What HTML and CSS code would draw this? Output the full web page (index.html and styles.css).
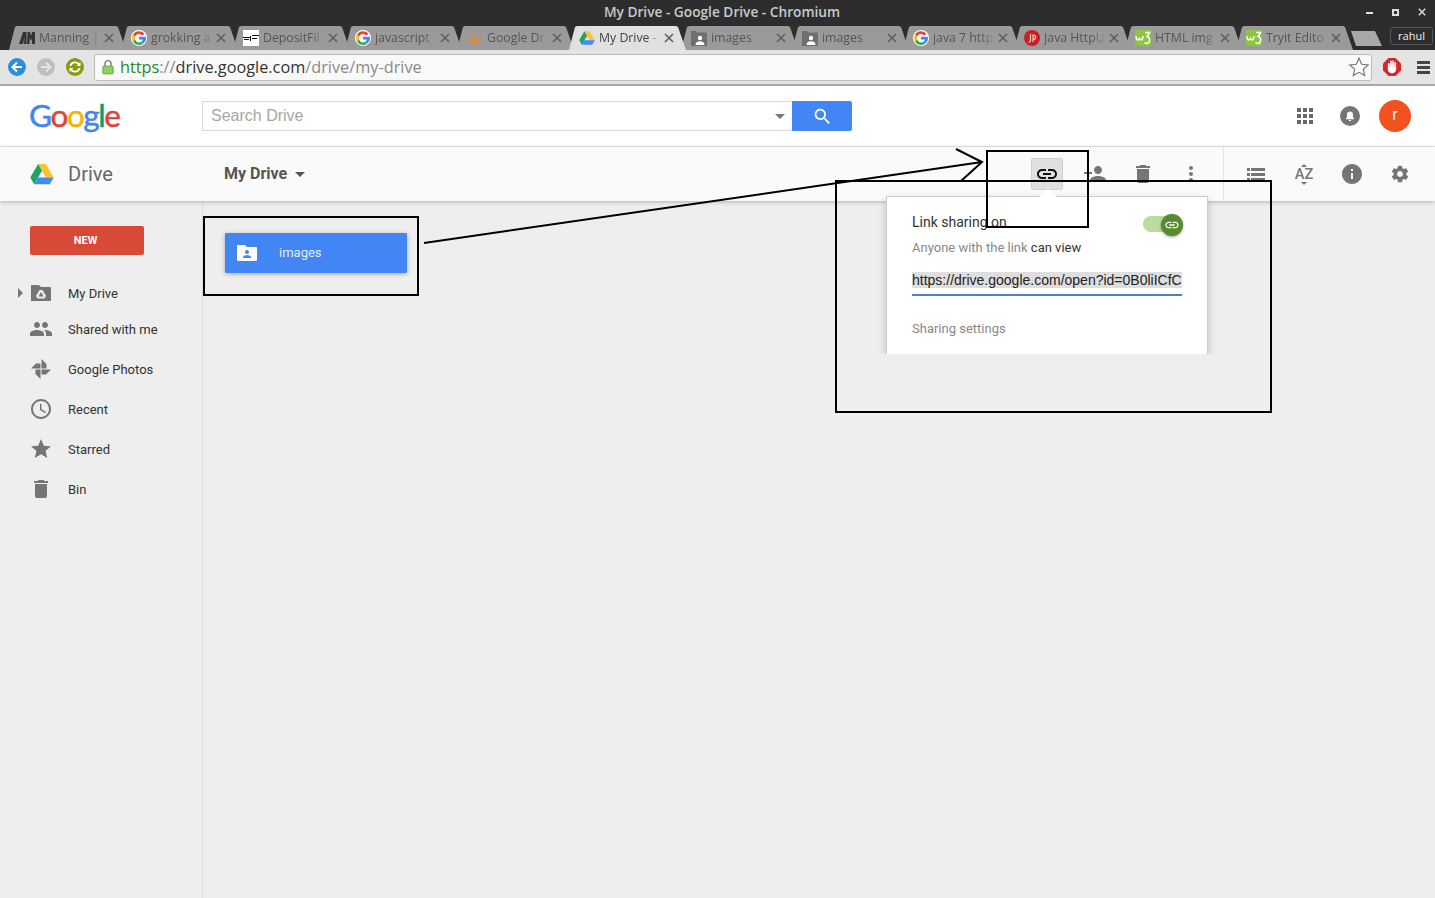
FILE: index.html
```html
<!DOCTYPE html>
<html lang="en">
<head>
    <meta charset="UTF-8">
    <title>My Drive - Google Drive - Chromium</title>
    <link rel="stylesheet" href="styles.css">
</head>
<body>
    <svg class="defs" width="0" height="0">
        <symbol id="ico-g" viewBox="0 0 16 16">
            <circle cx="8" cy="8" r="8" fill="#fff"/>
            <path d="M13.400 3.900A6.800 6.800 0 0 0 2 4.600l2.200 1.800A4 4 0 0 1 11 5.500z" fill="#ea4335"/>
            <path d="M2 4.600a6.800 6.800 0 0 0 0 6.800l2.200-1.800a4 4 0 0 1 0-3.200z" fill="#fbbc05"/>
            <path d="M2 11.400a6.800 6.800 0 0 0 10 2.300l-2.100-1.700A4 4 0 0 1 4.200 9.600z" fill="#34a853"/>
            <path d="M12 13.700a6.800 6.800 0 0 0 2.800-6.900H8v2.700h3.900A3.500 3.500 0 0 1 9.900 12z" fill="#4285f4"/>
        </symbol>
        <symbol id="ico-drive" viewBox="0 0 24 22">
            <path d="M8.100 1h7.800l7.800 13.400h-7.800z" fill="#f7c52d"/>
            <path d="M8.100 1 .3 14.400l3.900 6.800L12 7.700z" fill="#1ea362"/>
            <path d="M4.200 21.200h15.600l3.900-6.800H8.100z" fill="#4688f4"/>
        </symbol>
        <symbol id="ico-shared" viewBox="0 0 16 16">
            <path d="M0 1h5l1.500 1.500H15a1 1 0 0 1 1 1V16H0z" fill="#6f6f6f"/>
            <circle cx="9" cy="8" r="2.200" fill="#fff"/>
            <path d="M4.500 15c0-3 2.500-3.800 4.500-3.800s4.500.8 4.500 3.800z" fill="#fff"/>
        </symbol>
        <symbol id="ico-w3" viewBox="0 0 16 16">
            <rect width="16" height="16" fill="#8cc63f"/>
            <path d="M1 6c0 5 3 5 3.500 1.500C5 11 8 11 8 6" fill="none" stroke="#fff" stroke-width="1.400"/>
            <path d="M10 2.500h4.500l-2.500 4c3.500 0 3.500 7-.5 7-1 0-1.500-.5-2-1" fill="none" stroke="#fff" stroke-width="1.500"/>
        </symbol>
        <symbol id="ico-x" viewBox="0 0 10 10">
            <path d="M1 1l8 8M9 1l-8 8" stroke="currentColor" stroke-width="1.700" fill="none"/>
        </symbol>
        <symbol id="ico-link" viewBox="0 0 24 24">
            <path d="M3.900 12c0-1.710 1.390-3.100 3.100-3.100h4V7H7c-2.760 0-5 2.240-5 5s2.240 5 5 5h4v-1.900H7c-1.710 0-3.100-1.390-3.100-3.100zM8 13h8v-2H8v2zm9-6h-4v1.900h4c1.710 0 3.100 1.390 3.100 3.100s-1.390 3.100-3.100 3.100h-4V17h4c2.760 0 5-2.240 5-5s-2.240-5-5-5z"/>
        </symbol>
        <symbol id="ico-trash" viewBox="0 0 24 24">
            <path d="M6 19c0 1.100.9 2 2 2h8c1.100 0 2-.9 2-2V7H6v12zM19 4h-3.500l-1-1h-5l-1 1H5v2h14V4z"/>
        </symbol>
    </svg>

    <div class="titlebar">
        <div class="title">My Drive - Google Drive - Chromium</div>
        <div class="win-btns">
            <span class="win-min"></span>
            <span class="win-max"></span>
            <svg class="win-close" width="10" height="10"><use href="#ico-x"/></svg>
        </div>
    </div>

    <div class="tabstrip">
        <div class="tab">
            <svg class="favicon" viewBox="0 0 16 16"><path d="M0 14 4 2h3.500v12H5l.5-7L4 14zM8.500 2H11l1 4 1-4h3v12h-3V8l-1 3-1.500-3v6h-2.500z" fill="#333"/></svg>
            <span class="tab-title">Manning |</span>
            <svg class="tab-x"><use href="#ico-x"/></svg>
        </div>
        <div class="tab">
            <svg class="favicon"><use href="#ico-g"/></svg>
            <span class="tab-title">grokking a</span>
            <svg class="tab-x"><use href="#ico-x"/></svg>
        </div>
        <div class="tab">
            <svg class="favicon" viewBox="0 0 16 16"><rect width="16" height="16" fill="#fff"/><path d="M0 7h7v1H0zM9 5h7v1H9zM1 9h5v1H1zM7 6h1v5H7zM9 8h5v1H9z" fill="#111"/></svg>
            <span class="tab-title">DepositFil</span>
            <svg class="tab-x"><use href="#ico-x"/></svg>
        </div>
        <div class="tab">
            <svg class="favicon"><use href="#ico-g"/></svg>
            <span class="tab-title">javascript</span>
            <svg class="tab-x"><use href="#ico-x"/></svg>
        </div>
        <div class="tab">
            <svg class="favicon" viewBox="0 0 16 16"><path d="M4 14V9l3-5 2 1-1 4h6l-1 5zM1 9h2v5H1z" fill="#d98a3c"/></svg>
            <span class="tab-title">Google Dr</span>
            <svg class="tab-x"><use href="#ico-x"/></svg>
        </div>
        <div class="tab tab-active">
            <svg class="favicon"><use href="#ico-drive"/></svg>
            <span class="tab-title">My Drive -</span>
            <svg class="tab-x"><use href="#ico-x"/></svg>
        </div>
        <div class="tab tab-tight">
            <svg class="favicon"><use href="#ico-shared"/></svg>
            <span class="tab-title">images</span>
            <svg class="tab-x"><use href="#ico-x"/></svg>
        </div>
        <div class="tab tab-tight">
            <svg class="favicon"><use href="#ico-shared"/></svg>
            <span class="tab-title">images</span>
            <svg class="tab-x"><use href="#ico-x"/></svg>
        </div>
        <div class="tab tab-tight">
            <svg class="favicon"><use href="#ico-g"/></svg>
            <span class="tab-title">java 7 http</span>
            <svg class="tab-x"><use href="#ico-x"/></svg>
        </div>
        <div class="tab tab-tight">
            <svg class="favicon" viewBox="0 0 16 16"><circle cx="8" cy="8" r="8" fill="#c92020"/><path d="M6.500 4v7a2 2 0 0 1-2 1M9 12V5c3.500 0 3.500 4.500 0 4.500" stroke="#f0d0d0" stroke-width="1.200" fill="none"/></svg>
            <span class="tab-title">Java HttpU</span>
            <svg class="tab-x"><use href="#ico-x"/></svg>
        </div>
        <div class="tab tab-tight">
            <svg class="favicon"><use href="#ico-w3"/></svg>
            <span class="tab-title">HTML img</span>
            <svg class="tab-x"><use href="#ico-x"/></svg>
        </div>
        <div class="tab tab-tight">
            <svg class="favicon"><use href="#ico-w3"/></svg>
            <span class="tab-title">Tryit Edito</span>
            <svg class="tab-x"><use href="#ico-x"/></svg>
        </div>
        <div class="tab-new"></div>
        <div class="profile">rahul</div>
    </div>

    <div class="toolbar">
        <svg class="nav-btn" viewBox="0 0 18 18"><circle cx="9" cy="9" r="9" fill="#2b8fd8"/><path d="M14 9H5M9 4.500 4.500 9 9 13.500" stroke="#fff" stroke-width="2" fill="none"/></svg>
        <svg class="nav-btn" viewBox="0 0 18 18"><circle cx="9" cy="9" r="9" fill="#bcbfc2"/><path d="M4 9h9M9 4.500 13.500 9 9 13.500" stroke="#e4e4e4" stroke-width="2" fill="none"/></svg>
        <svg class="nav-btn" viewBox="0 0 18 18"><circle cx="9" cy="9" r="9" fill="#8b9a0c"/><path d="M4.300 8a5 5 0 0 1 8.900-1.500M13.700 10a5 5 0 0 1-8.900 1.500" stroke="#fff" stroke-width="1.800" fill="none"/><path d="M14.500 4v4h-4zM3.500 14v-4h4z" fill="#fff"/></svg>
        <div class="omnibox">
            <svg class="lock" viewBox="0 0 14 18"><path d="M3.500 8V5a3.500 3.500 0 0 1 7 0v3" stroke="#777" stroke-width="1.600" fill="none"/><rect x="1" y="8" width="12" height="9" rx="1" fill="#8ed05a" stroke="#5f9a35"/></svg>
            <div class="url"><span class="url-https">https</span><span class="url-dim">://</span><span class="url-host">drive.google.com</span><span class="url-dim">/drive/my-drive</span></div>
            <svg class="star" viewBox="0 0 24 24"><path d="M12 2.500l2.900 6.500 7.100.7-5.300 4.700 1.500 7-6.200-3.600-6.200 3.600 1.500-7L2 9.700l7.100-.7z" fill="#fff" stroke="#777" stroke-width="1.300"/></svg>
        </div>
        <svg class="adblock" viewBox="0 0 18 18">
            <path d="M5.500 0h7L18 5.500v7L12.500 18h-7L0 12.500v-7z" fill="#d8262c"/>
            <path d="M5.800 6v5M8 3.500V10M10 3.500V10M12.200 5v6" stroke="#fff" stroke-width="1.800" stroke-linecap="round"/>
            <path d="M4.900 9h8.200v2.500c0 2-1.800 3.700-4.100 3.700s-4.100-1.700-4.100-3.700z" fill="#fff"/>
        </svg>
        <div class="menu-btn"><span></span><span></span><span></span></div>
    </div>

    <header class="gbar">
        <div class="glogo"><span class="c-blue">G</span><span class="c-red">o</span><span class="c-yellow">o</span><span class="c-blue">g</span><span class="c-green">l</span><span class="c-red">e</span></div>
        <div class="search">
            <div class="search-box">
                <span class="search-text">Search Drive</span>
                <span class="caret caret-search"></span>
            </div>
            <div class="search-btn">
                <svg viewBox="0 0 24 24" width="21" height="21" fill="#fff"><path d="M15.500 14h-.79l-.28-.27C15.410 12.590 16 11.110 16 9.500 16 5.910 13.090 3 9.500 3S3 5.910 3 9.500 5.910 16 9.500 16c1.610 0 3.090-.59 4.230-1.570l.27.28v.79l5 4.990L20.490 19l-4.990-5zm-6 0C7.010 14 5 11.990 5 9.500S7.010 5 9.500 5 14 7.010 14 9.500 11.990 14 9.500 14z"/></svg>
            </div>
        </div>
        <div class="gbar-right">
            <svg class="apps" viewBox="0 0 16 16" fill="#666"><path d="M0 0h4v4H0zM6 0h4v4H6zM12 0h4v4h-4zM0 6h4v4H0zM6 6h4v4H6zM12 6h4v4h-4zM0 12h4v4H0zM6 12h4v4H6zM12 12h4v4h-4z"/></svg>
            <svg class="bell" viewBox="0 0 20 20"><circle cx="10" cy="10" r="10" fill="#757575"/><path d="M10 5.500a3 3 0 0 0-3 3v2.500L6 12.500v.8h8v-.8L13 11V8.500a3 3 0 0 0-3-3zM8.800 14a1.200 1.200 0 0 0 2.400 0z" fill="#fff"/></svg>
            <div class="avatar">r</div>
        </div>
    </header>

    <div class="drivebar">
        <div class="brand">
            <svg class="brand-logo"><use href="#ico-drive"/></svg>
            <span class="brand-name">Drive</span>
        </div>
        <div class="crumb">My Drive <span class="caret caret-crumb"></span></div>
        <div class="actions">
            <div class="act act-on"><svg viewBox="0 0 24 24" width="24" height="24" fill="#111"><use href="#ico-link"/></svg></div>
            <div class="act"><svg viewBox="0 0 24 24" width="24" height="24"><path d="M15 12c2.210 0 4-1.790 4-4s-1.790-4-4-4-4 1.790-4 4 1.790 4 4 4zm-9-2V7H4v3H1v2h3v3h2v-3h3v-2H6zm9 4c-2.670 0-8 1.340-8 4v2h16v-2c0-2.660-5.330-4-8-4z"/></svg></div>
            <div class="act"><svg viewBox="0 0 24 24" width="24" height="24"><use href="#ico-trash"/></svg></div>
            <div class="act"><svg viewBox="0 0 24 24" width="24" height="24"><path d="M12 8c1.100 0 2-.9 2-2s-.9-2-2-2-2 .9-2 2 .9 2 2 2zm0 2c-1.100 0-2 .9-2 2s.9 2 2 2 2-.9 2-2-.9-2-2-2zm0 6c-1.100 0-2 .9-2 2s.9 2 2 2 2-.9 2-2-.9-2-2-2z"/></svg></div>
            <div class="act-sep"></div>
            <div class="act"><svg viewBox="0 0 24 24" width="24" height="24"><path d="M3 6h3v3H3zM7 6h14v3H7zM3 11h3v3H3zM7 11h14v3H7zM3 16h3v3H3zM7 16h14v3H7z"/></svg></div>
            <div class="act act-sort"><span class="sort-arrow sort-up"></span>AZ<span class="sort-arrow sort-down"></span></div>
            <div class="act"><svg viewBox="0 0 24 24" width="24" height="24"><path d="M12 2C6.480 2 2 6.480 2 12s4.480 10 10 10 10-4.480 10-10S17.520 2 12 2zm1 15h-2v-6h2v6zm0-8h-2V7h2v2z"/></svg></div>
            <div class="act"><svg viewBox="0 0 24 24" width="20" height="20"><path d="M19.430 12.980c.04-.32.07-.64.07-.98s-.03-.66-.07-.98l2.110-1.650c.19-.15.24-.42.12-.64l-2-3.460c-.12-.22-.39-.3-.61-.22l-2.490 1c-.52-.4-1.080-.73-1.690-.98l-.38-2.650C14.460 2.180 14.250 2 14 2h-4c-.25 0-.46.18-.49.42l-.38 2.650c-.61.25-1.170.59-1.690.98l-2.490-1c-.23-.09-.49 0-.61.22l-2 3.460c-.13.22-.07.49.12.64l2.110 1.650c-.04.32-.07.65-.07.98s.03.66.07.98l-2.110 1.650c-.19.15-.24.42-.12.64l2 3.460c.12.22.39.3.61.22l2.490-1c.52.4 1.080.73 1.690.98l.38 2.650c.03.24.24.42.49.42h4c.25 0 .46-.18.49-.42l.38-2.650c.61-.25 1.170-.59 1.690-.98l2.490 1c.23.09.49 0 .61-.22l2-3.460c.12-.22.07-.49-.12-.64l-2.110-1.650zM12 15.500c-1.930 0-3.500-1.570-3.500-3.500s1.570-3.500 3.500-3.500 3.500 1.570 3.500 3.500-1.570 3.500-3.500 3.500z"/></svg></div>
        </div>
    </div>

    <div class="content">
        <aside class="sidebar">
            <div class="new-btn">NEW</div>
            <nav class="nav">
                <div class="nav-item nav-first">
                    <span class="nav-arrow"></span>
                    <svg class="nav-icon" viewBox="0 0 24 24"><path d="M2 4h8l2 2h9a1 1 0 0 1 1 1v13H2z" fill="#757575"/><path d="M10.500 9h3l3.500 6-1.500 2.500h-7L7 15z" fill="#eee"/><path d="M12 11l-2.500 4.500h5z" fill="#757575"/></svg>
                    My Drive
                </div>
                <div class="nav-item">
                    <svg class="nav-icon" viewBox="0 0 24 24"><path d="M16 11c1.660 0 2.990-1.340 2.990-3S17.660 5 16 5c-1.660 0-3 1.340-3 3s1.340 3 3 3zm-8 0c1.660 0 2.990-1.340 2.990-3S9.660 5 8 5C6.340 5 5 6.340 5 8s1.340 3 3 3zm0 2c-2.330 0-7 1.170-7 3.500V19h14v-2.500c0-2.330-4.670-3.500-7-3.500zm8 0c-.29 0-.62.02-.97.05 1.160.84 1.970 1.970 1.970 3.450V19h6v-2.500c0-2.330-4.670-3.500-7-3.500z"/></svg>
                    Shared with me
                </div>
                <div class="nav-item">
                    <svg class="nav-icon" viewBox="0 0 24 24"><path d="M12.500 2l5 5v4.500h-5zM22 12.500l-5 5h-4.500v-5zM11.500 22l-5-5v-4.500h5zM2 11.500l5-5h4.500v5z"/></svg>
                    Google Photos
                </div>
                <div class="nav-item">
                    <svg class="nav-icon" viewBox="0 0 24 24"><path d="M11.990 2C6.470 2 2 6.480 2 12s4.470 10 9.990 10C17.520 22 22 17.520 22 12S17.520 2 11.990 2zM12 20c-4.420 0-8-3.580-8-8s3.580-8 8-8 8 3.580 8 8-3.580 8-8 8zm.5-13H11v6l5.250 3.150.75-1.230-4.500-2.670z"/></svg>
                    Recent
                </div>
                <div class="nav-item">
                    <svg class="nav-icon" viewBox="0 0 24 24"><path d="M12 17.270 18.180 21l-1.640-7.030L22 9.240l-7.190-.61L12 2 9.190 8.630 2 9.240l5.460 4.730L5.820 21z"/></svg>
                    Starred
                </div>
                <div class="nav-item">
                    <svg class="nav-icon"><use href="#ico-trash"/></svg>
                    Bin
                </div>
            </nav>
        </aside>
        <main class="files">
            <div class="folder">
                <svg class="folder-icon" viewBox="0 0 24 24"><path d="M2 4h8l2 2h9a1 1 0 0 1 1 1v12a1 1 0 0 1-1 1H3a1 1 0 0 1-1-1z" fill="#fff"/><circle cx="12" cy="11" r="2" fill="#4285f4"/><path d="M8 17v-1c0-1.300 2.700-2 4-2s4 .7 4 2v1z" fill="#4285f4"/></svg>
                <span class="folder-name">images</span>
            </div>
        </main>
    </div>

    <div class="popup">
        <span class="popup-nib"></span>
        <div class="popup-head">
            <span class="popup-title">Link sharing on</span>
            <div class="toggle">
                <span class="toggle-knob"><svg viewBox="0 0 24 24" width="16" height="16" fill="#fff"><use href="#ico-link"/></svg></span>
            </div>
        </div>
        <div class="popup-sub">Anyone with the link <b>can view</b></div>
        <div class="popup-url"><span>https://drive.google.com/open?id=0B0liICfC</span></div>
        <div class="popup-settings">Sharing settings</div>
    </div>

    <svg class="notes" width="1435" height="898" fill="none" stroke="#000" stroke-width="2">
        <rect x="987" y="151" width="101" height="76"/>
        <rect x="836" y="181" width="435" height="231"/>
        <rect x="204" y="217" width="214" height="78"/>
        <path d="M424 243 982 162M956 149l26 13-21 19"/>
    </svg>
</body>
</html>
```

FILE: styles.css
```css
* {
    box-sizing: border-box;
}
html, body {
    margin: 0;
    padding: 0;
    height: 898px;
    overflow: hidden;
}
body {
    position: relative;
    font-family: Roboto, sans-serif;
    background-color: #eeeeee;
    color: #333;
}
svg {
    display: block;
    flex: none;
}
.defs {
    position: absolute;
}

/* window frame */
.titlebar {
    height: 26px;
    background-color: #2d2d2d;
    display: flex;
    align-items: center;
    justify-content: center;
    padding: 0 0 4px 9px;
    position: relative;
}
.title {
    font-family: "Open Sans", sans-serif;
    font-weight: 600;
    font-size: 13.7px;
    color: #c9c9c9;
}
.win-btns {
    position: absolute;
    right: 9px;
    top: 8px;
    display: flex;
    align-items: center;
    gap: 19px;
    color: #e0e0e0;
}
.win-min {
    width: 7px;
    height: 2px;
    margin-top: 2px;
    background-color: #e0e0e0;
}
.win-max {
    width: 7px;
    height: 7px;
    border: 2px solid #e0e0e0;
}
.win-close {
    width: 8px;
    height: 8px;
}

.tabstrip {
    height: 24px;
    background-color: #2d2d2d;
    display: flex;
    padding-left: 7px;
}
.tab {
    flex: none;
    width: 122px;
    height: 24px;
    margin-right: -10px;
    padding: 0 0 0 12px;
    display: flex;
    align-items: center;
    background-color: #9a9a9a;
    clip-path: polygon(0 100%, 2px 100%, 8px 1px, 10px 0, 109px 0, 111px 1px, 119px 100%, 122px 100%);
    font-family: "Open Sans", sans-serif;
    font-size: 12.3px;
    color: #5b5353;
}
.tab-tight {
    margin-right: -11px;
}
.tab-active {
    background-color: #e0e0e0;
    color: #444;
    position: relative;
    z-index: 1;
}
.favicon {
    width: 16px;
    height: 16px;
}
.tab-title {
    width: 62px;
    margin: 0 0 2px 4px;
    overflow: hidden;
    white-space: nowrap;
    -webkit-mask-image: linear-gradient(to right, #000 78%, transparent);
    mask-image: linear-gradient(to right, #000 78%, transparent);
}
.tab-x {
    width: 10px;
    height: 10px;
    margin-left: 3px;
    color: #606060;
}
.tab-new {
    width: 31px;
    height: 15px;
    margin: 5px 0 0 6px;
    background-color: #a8a8a8;
    clip-path: polygon(0 0, 24px 0, 31px 100%, 5px 100%);
}
.profile {
    width: 43px;
    height: 18px;
    margin: 1px 2px 0 auto;
    border: 1px solid #555;
    border-radius: 3px;
    font-family: "Open Sans", sans-serif;
    font-size: 11px;
    line-height: 15px;
    text-align: center;
    color: #eee;
}

/* browser toolbar */
.toolbar {
    height: 36px;
    background-color: #e4e4e4;
    border-bottom: 2px solid #a9a9a9;
    display: flex;
    align-items: center;
    padding-left: 8px;
}
.nav-btn {
    width: 18px;
    height: 18px;
    margin-right: 11px;
}
.omnibox {
    width: 1278px;
    height: 27px;
    margin-left: -1px;
    display: flex;
    align-items: center;
    padding: 0 1px 0 7px;
    background-color: #f9f9f9;
    border: 1px solid #bcbcbc;
    border-radius: 3px;
}
.lock {
    width: 12px;
    height: 16px;
}
.url {
    margin-left: 6px;
    font-family: "Open Sans", sans-serif;
    font-size: 16.3px;
    white-space: nowrap;
}
.url-https {
    color: #1f8a1f;
}
.url-dim {
    color: #8a8a8a;
}
.url-host {
    color: #333;
}
.star {
    width: 22px;
    height: 22px;
    margin-left: auto;
}
.adblock {
    width: 18px;
    height: 18px;
    margin-left: 11px;
}
.menu-btn {
    display: flex;
    flex-direction: column;
    gap: 2px;
    width: 13px;
    margin-left: 16px;
}
.menu-btn span {
    height: 3px;
    background-color: #444;
}

/* google bar */
.gbar {
    height: 61px;
    background-color: #fff;
    border-bottom: 1px solid #e5e5e5;
    display: flex;
    align-items: center;
    padding-left: 30px;
}
.glogo {
    width: 172px;
    margin: -3px 0 0 -1px;
    flex: none;
    font-family: Lato, sans-serif;
    font-size: 31.5px;
    letter-spacing: -1.4px;
    line-height: 36px;
    -webkit-text-stroke: 0.5px;
}
.c-blue { color: #4285f4; }
.c-red { color: #db4437; }
.c-yellow { color: #f4b400; }
.c-green { color: #0f9d58; }
.search {
    display: flex;
    height: 30px;
    margin-left: 1px;
}
.search-box {
    width: 590px;
    display: flex;
    align-items: center;
    justify-content: space-between;
    padding: 0 7px 0 8px;
    border: 1px solid #d9d9d9;
    border-right: none;
}
.search-text {
    font-family: "Liberation Sans", Arial, sans-serif;
    font-size: 16px;
    color: #a6a6a6;
}
.caret {
    display: inline-block;
    width: 0;
    height: 0;
    border-left: 5px solid transparent;
    border-right: 5px solid transparent;
    border-top: 5px solid #777;
}
.search-btn {
    width: 60px;
    display: flex;
    align-items: center;
    justify-content: center;
    background-color: #4285f4;
    border-radius: 0 2px 2px 0;
}
.gbar-right {
    margin-left: auto;
    display: flex;
    align-items: center;
    padding-right: 24px;
}
.apps {
    width: 16px;
    height: 16px;
}
.bell {
    width: 20px;
    height: 20px;
    margin-left: 27px;
}
.avatar {
    width: 32px;
    height: 32px;
    margin-left: 19px;
    border-radius: 50%;
    background-color: #f4511e;
    color: #fff;
    font-size: 16px;
    line-height: 30px;
    text-align: center;
}

/* drive toolbar */
.drivebar {
    height: 54px;
    background-color: #fafafa;
    box-shadow: 0 1px 4px rgba(0, 0, 0, 0.25);
    position: relative;
    z-index: 2;
    display: flex;
    align-items: center;
    padding-left: 30px;
}
.brand {
    width: 194px;
    display: flex;
    align-items: center;
}
.brand-logo {
    width: 24px;
    height: 22px;
}
.brand-name {
    margin-left: 14px;
    font-size: 20px;
    color: #666;
}
.crumb {
    margin-bottom: 2px;
    font-size: 16px;
    font-weight: 700;
    color: #555;
}
.caret-crumb {
    margin: 0 0 2px 4px;
    border-top-color: #555;
}
.actions {
    margin-left: auto;
    display: flex;
    align-items: center;
    padding-right: 11px;
}
.act {
    width: 48px;
    height: 32px;
    display: flex;
    align-items: center;
    justify-content: center;
    fill: #757575;
}
.act-on {
    width: 32px;
    margin-right: 8px;
    background-color: #e0e0e0;
    border: 1px solid #d0d0d0;
    border-radius: 2px;
}
.act-sep {
    width: 1px;
    height: 54px;
    margin: 0 8px;
    background-color: #e5e5e5;
}
.act-sort {
    flex-direction: column;
    font-size: 14.5px;
    font-weight: 500;
    line-height: 13px;
    color: #757575;
    gap: 1px;
}
.sort-arrow {
    width: 0;
    height: 0;
    border-left: 3px solid transparent;
    border-right: 3px solid transparent;
}
.sort-up {
    border-bottom: 3px solid #757575;
}
.sort-down {
    border-top: 3px solid #757575;
}

/* sidebar and file list */
.content {
    display: flex;
    height: 697px;
}
.sidebar {
    width: 203px;
    flex: none;
    border-right: 1px solid #ddd;
    padding-top: 25px;
}
.new-btn {
    width: 114px;
    height: 29px;
    margin-left: 30px;
    background-color: #d74a38;
    border-radius: 2px;
    color: #fff;
    font-size: 11px;
    font-weight: 700;
    line-height: 29px;
    text-align: center;
    padding-right: 3px;
}
.nav {
    margin-top: 22px;
}
.nav-item {
    height: 40px;
    display: flex;
    align-items: center;
    padding-left: 68px;
    position: relative;
    font-size: 13px;
    color: #333;
}
.nav-first {
    height: 32px;
}
.nav-icon {
    position: absolute;
    left: 29px;
    top: 50%;
    margin-top: -12px;
    width: 24px;
    height: 24px;
    fill: #757575;
}
.nav-arrow {
    position: absolute;
    left: 18px;
    top: 11px;
    border-left: 5px solid #777;
    border-top: 5px solid transparent;
    border-bottom: 5px solid transparent;
}
.files {
    flex: 1;
    padding: 32px 0 0 22px;
}
.folder {
    width: 182px;
    height: 40px;
    display: flex;
    align-items: center;
    padding-left: 10px;
    background-color: #4285f4;
    border-radius: 1px;
    box-shadow: 0 1px 4px rgba(0, 0, 0, 0.3);
}
.folder-icon {
    width: 24px;
    height: 24px;
}
.folder-name {
    margin: 0 0 2px 20px;
    font-size: 13px;
    color: #e3edfd;
}

/* share popup */
.popup {
    position: absolute;
    left: 886px;
    top: 196px;
    width: 322px;
    height: 158px;
    z-index: 3;
    padding: 0 25px;
    background-color: #fff;
    border: 1px solid #ccc;
    border-bottom: none;
    box-shadow: 0 3px 8px rgba(0, 0, 0, 0.2);
    clip-path: inset(-12px -12px 0 -12px);
}
.popup-nib {
    position: absolute;
    left: 152px;
    top: -8px;
    border-left: 9px solid transparent;
    border-right: 9px solid transparent;
    border-bottom: 8px solid #fff;
}
.popup-head {
    display: flex;
    align-items: center;
    justify-content: space-between;
    height: 26px;
    margin-top: 12px;
}
.popup-title {
    font-size: 14px;
    color: #333;
}
.toggle {
    width: 37px;
    height: 16px;
    margin: 4px 2px 0 0;
    border-radius: 8px;
    background-color: #bcdc9f;
    position: relative;
}
.toggle-knob {
    position: absolute;
    right: -3px;
    top: -2px;
    width: 22px;
    height: 22px;
    display: flex;
    align-items: center;
    justify-content: center;
    border-radius: 50%;
    background-color: #558b2f;
    box-shadow: 0 1px 3px rgba(0, 0, 0, 0.4);
}
.popup-sub {
    margin-top: 5px;
    font-size: 13px;
    line-height: 16px;
    color: #888;
}
.popup-sub b {
    font-weight: 400;
    color: #333;
}
.popup-url {
    margin-top: 16px;
    height: 24px;
    overflow: hidden;
    border-bottom: 2px solid #4d7fc4;
    font-family: "Liberation Sans", Arial, sans-serif;
    font-size: 14px;
    line-height: 17px;
    white-space: nowrap;
    color: #222;
}
.popup-url span {
    background-color: #dedede;
}
.popup-settings {
    margin-top: 25px;
    font-size: 13px;
    color: #888;
}

/* hand drawn marks on top of the screenshot */
.notes {
    position: absolute;
    left: 0;
    top: 0;
    z-index: 4;
    pointer-events: none;
}
```
